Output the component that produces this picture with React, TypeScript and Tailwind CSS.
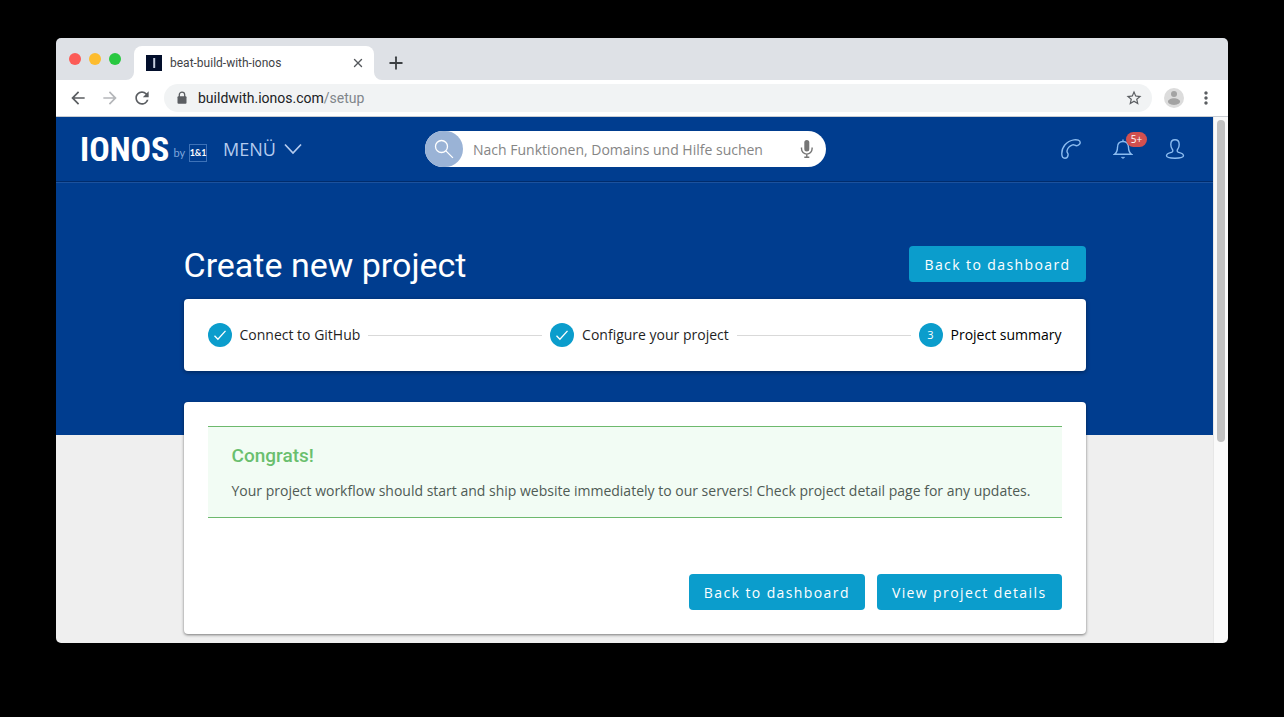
import React from "react";
import { X, Plus } from "lucide-react";
import {
  MdArrowBack,
  MdArrowForward,
  MdRefresh,
  MdStarBorder,
  MdMoreVert,
} from "react-icons/md";

function TabStrip() {
  return (
    <div className="flex h-[42px] items-end bg-[#dee1e6]">
      <div className="flex gap-2 self-center pr-[13px] pl-[13px]">
        <span className="size-3 rounded-full bg-[#fc5b57]" />
        <span className="size-3 rounded-full bg-[#fdbc2e]" />
        <span className="size-3 rounded-full bg-[#28c840]" />
      </div>
      <div className="relative flex h-[34px] w-60 items-center rounded-t-lg bg-white pr-[9px] pl-3">
        <svg className="absolute bottom-0 -left-2 size-2" viewBox="0 0 8 8" aria-hidden="true">
          <path d="M8 0v8H0a8 8 0 0 0 8-8z" fill="#fff" />
        </svg>
        <svg className="absolute -right-2 bottom-0 size-2" viewBox="0 0 8 8" aria-hidden="true">
          <path d="M0 0v8h8a8 8 0 0 1-8-8z" fill="#fff" />
        </svg>
        <svg className="size-4 shrink-0" viewBox="0 0 16 16" aria-hidden="true">
          <rect width="16" height="16" fill="#020e2b" />
          <rect x="7.2" y="3" width="2" height="10" rx="0.5" fill="#c3cbdc" />
        </svg>
        <span className="flex-1 pl-2 font-['Roboto',sans-serif] text-xs text-[#3f4347]">
          beat-build-with-ionos
        </span>
        <button type="button" aria-label="Close tab" className="text-[#55585c]">
          <X className="size-[14px]" strokeWidth={2.4} />
        </button>
      </div>
      <button type="button" aria-label="New tab" className="ml-3 flex h-[34px] items-center text-[#3c4043]">
        <Plus className="size-5" strokeWidth={2.2} />
      </button>
    </div>
  );
}

function Toolbar() {
  return (
    <div className="flex h-[37px] items-center border-b border-[#c9cdd3] bg-white px-3 text-[#5b5e62]">
      <div className="flex gap-3">
        <button type="button" aria-label="Back">
          <MdArrowBack className="size-5" />
        </button>
        <button type="button" aria-label="Forward" className="text-[#b5b7ba]">
          <MdArrowForward className="size-5" />
        </button>
        <button type="button" aria-label="Reload">
          <MdRefresh className="size-5" />
        </button>
      </div>
      <div className="ml-3 flex h-7 flex-1 items-center rounded-full bg-[#f1f3f4] px-[11px]">
        <svg className="size-[14px]" viewBox="0 0 14 14" aria-hidden="true">
          <path d="M4.300 6V3.800a2.700 2.700 0 0 1 5.400 0V6" fill="none" stroke="currentColor" strokeWidth="1.300" />
          <rect x="2.500" y="5.200" width="9" height="7.600" rx="1" fill="currentColor" />
        </svg>
        <p className="flex-1 pl-[9px] font-['Roboto',sans-serif] text-sm text-[#202124]">
          buildwith.ionos.com<span className="text-[#80868b]">/setup</span>
        </p>
        <button type="button" aria-label="Bookmark this page" className="-mr-0.5">
          <MdStarBorder className="size-[18px]" />
        </button>
      </div>
      <button type="button" aria-label="Profile" className="ml-3">
        <svg className="size-5" viewBox="0 0 20 20" aria-hidden="true">
          <circle cx="10" cy="10" r="10" fill="#dcdcdc" />
          <circle cx="10" cy="6" r="3" fill="#a3a3a3" />
          <path d="M4 13.6c0-2 3-3.3 6-3.3s6 1.3 6 3.3S13 17 10 17s-6-1.400-6-3.400z" fill="#a3a3a3" />
        </svg>
      </button>
      <button type="button" aria-label="Browser menu" className="ml-3">
        <MdMoreVert className="size-5" />
      </button>
    </div>
  );
}

function Logo() {
  return (
    <a href="#home" aria-label="IONOS by 1&1" className="flex items-end">
      <span className="font-['Roboto_Condensed','Open_Sans_Condensed','Noto_Sans_Condensed','Roboto',sans-serif] text-[34px] leading-[26px] font-bold text-white">
        IONOS
      </span>
      <span className="ml-1 font-['Lato',sans-serif] text-[11px] leading-[18px] text-[#7fa6dc]">by</span>
      <span className="ml-1 flex h-[18px] w-[18px] items-center justify-center border border-[#3d72b8] font-['Lato',sans-serif] text-[9px] font-bold text-white">
        1&amp;1
      </span>
    </a>
  );
}

function SiteHeader() {
  return (
    <header className="flex h-[66px] items-center border-b border-[#1c529d] pb-0.5 shadow-[inset_0_-1px_0_#002c6c]">
      <div className="flex flex-1 items-center pl-6">
        <Logo />
        <button
          type="button"
          className="ml-4 flex items-center gap-2 font-['Open_Sans',sans-serif] text-lg text-[#b4cbee]"
        >
          MENÜ
          <svg className="h-3 w-[18px]" viewBox="0 0 18 12" fill="none" aria-hidden="true">
            <path d="M1 1.500l8 8.500 8-8.500" stroke="#b4cbee" strokeWidth="1.700" />
          </svg>
        </button>
      </div>
      <form className="mr-[14px] flex h-9 w-[401px] items-center rounded-full bg-white" role="search">
        <button
          type="button"
          aria-label="Suchen"
          className="flex h-9 w-[38px] items-center justify-center rounded-full bg-[#9ab3d6] text-white"
        >
          <svg className="size-5" viewBox="0 0 20 20" fill="none" stroke="currentColor" strokeWidth="1.300" aria-hidden="true">
            <circle cx="7.500" cy="7.500" r="6" />
            <path d="M11.900 11.900l7 7" />
          </svg>
        </button>
        <input
          type="search"
          aria-label="Suche"
          placeholder="Nach Funktionen, Domains und Hilfe suchen"
          className="min-w-0 flex-1 pt-0.5 pl-[10px] font-['Open_Sans',sans-serif] text-sm outline-none placeholder:text-[#858585]"
        />
        <button type="button" aria-label="Spracheingabe" className="pr-[10px] text-[#757575]">
          <svg className="size-[18px]" viewBox="0 0 18 18" aria-hidden="true">
            <rect x="6.300" y="0" width="5" height="11.500" rx="2.500" fill="currentColor" />
            <path d="M3.500 7.500v1.300a5.300 5.300 0 0 0 10.600 0V7.500M8.800 14v3M6.300 17.200h5" fill="none" stroke="currentColor" strokeWidth="1.400" />
          </svg>
        </button>
      </form>
      <div className="flex flex-1 items-center justify-end gap-8 pr-7 text-[#8bbcf0]">
        <button type="button" aria-label="Kontakt">
          <svg className="size-5" viewBox="0 0 20 20" fill="none" stroke="currentColor" strokeWidth="1.400" aria-hidden="true">
            <path d="M.8 15C.6 8 5.500 2 13 .9c3.200-.5 6.200.4 6.200 2.500 0 1.500-1.700 3.300-3.600 3.300-1.700 0-2.500-1.300-4-.8-2.700.9-5 3.200-5.600 6-.3 1.600 1.300 2.200 1.100 3.900-.2 1.900-1.500 3.400-3.200 3.400C2 19.200.9 17.500.8 15z" />
          </svg>
        </button>
        <button type="button" aria-label="Benachrichtigungen" className="relative">
          <svg className="size-5" viewBox="0 0 20 20" fill="none" stroke="currentColor" strokeWidth="1.400" aria-hidden="true">
            <path d="M10 .5v2M1.500 15.300h17c-2.500-1.900-3-3.600-3-7C15.500 4.500 13.200 2.500 10 2.500S4.500 4.500 4.500 8.300c0 3.400-.5 5.100-3 7z" />
            <path d="M8.300 18.300h3.400L10 19.600z" fill="currentColor" strokeWidth=".6" />
          </svg>
          <span className="absolute -top-[7px] left-[13px] flex h-[15px] w-[21px] items-center justify-center rounded-full bg-[#d2504f] font-['Open_Sans',sans-serif] text-[10px] text-white">
            5+
          </span>
        </button>
        <button type="button" aria-label="Konto">
          <svg className="size-5" viewBox="0 0 20 20" fill="none" stroke="currentColor" strokeWidth="1.400" aria-hidden="true">
            <path d="M10 .8c-2.800 0-4.200 1.900-4.200 4.700 0 1.800.5 3.500 1.500 4.700.8 1 .7 2.300-.4 2.900-1.400.7-5.400.9-5.400 3.700 0 1.700 3.800 2.400 8.500 2.400s8.500-.7 8.500-2.400c0-2.800-4-3-5.400-3.700-1.100-.6-1.200-1.900-.4-2.900 1-1.200 1.500-2.900 1.500-4.700C14.200 2.700 12.800.8 10 .8z" />
          </svg>
        </button>
      </div>
    </header>
  );
}

function ActionButton({ children }: { children: React.ReactNode }) {
  return (
    <button
      type="button"
      className="h-9 rounded-sm bg-[#0b9dcc] px-[15px] pt-0.5 text-sm tracking-widest text-white"
    >
      {children}
    </button>
  );
}

function StepBadge({ step, done }: { step: number; done: boolean }) {
  return (
    <span className="flex size-6 items-center justify-center rounded-full bg-[#0b9dcc] text-[11px] text-white">
      {done ? (
        <svg className="size-3" viewBox="0 0 12 12" fill="none" stroke="#fff" strokeWidth="1.300" aria-hidden="true">
          <path d="M.5 6.800l3.400 3.400L11.500 1.900" />
        </svg>
      ) : (
        step
      )}
    </span>
  );
}

const steps = [
  { label: "Connect to GitHub", done: true },
  { label: "Configure your project", done: true },
  { label: "Project summary", done: false },
];

function Stepper() {
  return (
    <ol className="mt-[17px] flex h-[72px] items-center gap-2 rounded-sm bg-white px-6 text-sm text-[#1f1f1f] shadow-[0_1px_4px_rgba(0,0,0,0.4)]">
      {steps.map((s, i) => (
        <React.Fragment key={s.label}>
          {i > 0 && <li aria-hidden="true" className="h-px flex-1 bg-[#d9d9d9]" />}
          <li className={s.done ? "flex items-center gap-2" : "flex items-center gap-2 text-black"}>
            <StepBadge step={i + 1} done={s.done} />
            {s.label}
          </li>
        </React.Fragment>
      ))}
    </ol>
  );
}

export default function App() {
  return (
    <div className="min-h-screen bg-black px-14 pt-[38px]">
      <div className="overflow-hidden rounded-[5px]">
        <TabStrip />
        <Toolbar />
        <div className="flex">
          <div className="min-w-0 flex-1 bg-[#efefef] font-['Open_Sans',sans-serif]">
            <div className="bg-[#003d8f] pb-16">
              <SiteHeader />
              <div className="mx-auto max-w-[902px] pt-[63px]">
                <div className="flex h-9 items-center justify-between">
                  <h1 className="pt-0.5 font-['Roboto',sans-serif] text-[34px] leading-9 font-normal text-white">
                    Create new project
                  </h1>
                  <ActionButton>Back to dashboard</ActionButton>
                </div>
                <Stepper />
              </div>
            </div>
            <main className="mx-auto max-w-[902px] pb-[9px]">
              <section className="relative -mt-[33px] rounded-sm bg-white p-6 shadow-[0_1px_3px_rgba(0,0,0,0.5)]">
                <div className="border-y border-[#6db96d] bg-[#f2fcf4] px-6 pt-[15px] pb-[15px]">
                  <h2 className="font-['Roboto',sans-serif] text-[19px] leading-7 font-medium text-[#6abf6e]">
                    Congrats!
                  </h2>
                  <p className="mt-[10px] text-sm leading-[22px] text-[#4f5b54]">
                    Your project workflow should start and ship website immediately to our servers! Check
                    project detail page for any updates.
                  </p>
                </div>
                <div className="mt-14 flex justify-end gap-3">
                  <ActionButton>Back to dashboard</ActionButton>
                  <ActionButton>View project details</ActionButton>
                </div>
              </section>
            </main>
          </div>
          <div className="w-[15px] border-l border-[#e7e7e7] bg-[#fafafa] px-[3px] pt-[3px]">
            <div className="h-[322px] rounded-full bg-[#c1c1c1]" />
          </div>
        </div>
      </div>
    </div>
  );
}
